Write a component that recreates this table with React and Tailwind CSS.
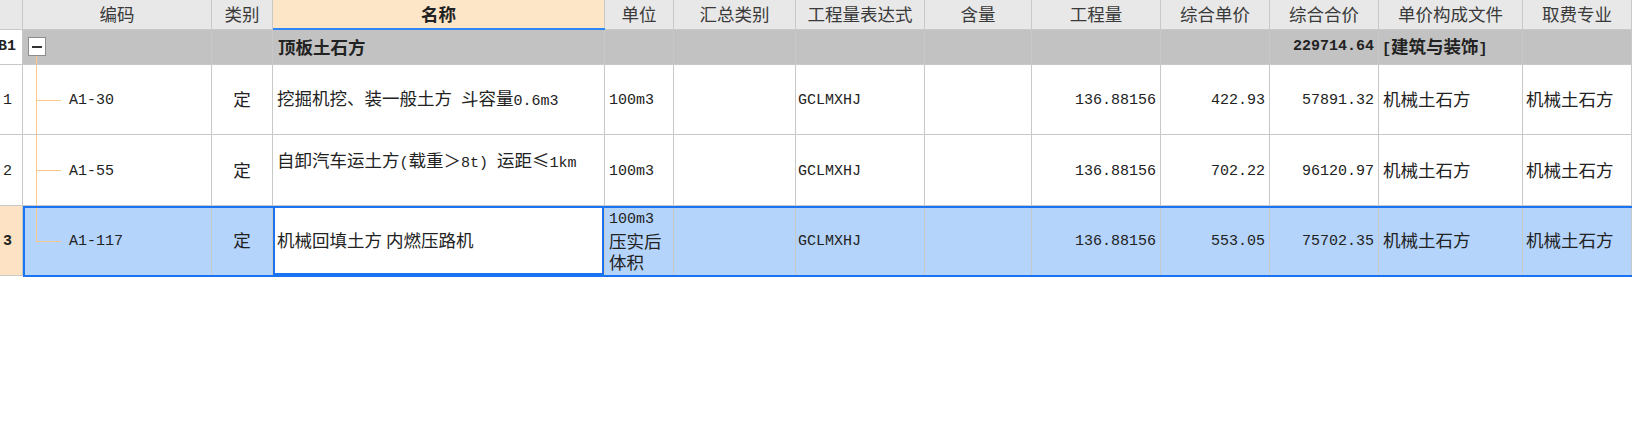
import React from "react";

const GRID =
  "grid grid-cols-[23px_189px_61px_332px_69px_122px_129px_107px_129px_109px_109px_144px_109px]";
const MONO = "font-['Liberation_Mono',monospace] text-[15px]";
const MONOB = "font-['Liberation_Mono',monospace] text-[15px] font-bold";

function Mixed({ text }) {
  const parts = text.match(/[\x20-\x7e]+|[^\x20-\x7e]+/g) || [];
  return (
    <span className="leading-[21px]">
      {parts.map((p, i) =>
        /^[\x20-\x7e]+$/.test(p) ? (
          <span key={i} className={MONO + " whitespace-pre"}>
            {p}
          </span>
        ) : (
          <span key={i}>{p}</span>
        )
      )}
    </span>
  );
}

const cell = "flex items-center border-r border-b border-[#c8c8c8] overflow-hidden whitespace-nowrap";
const mcell = "flex items-center pt-[4px] border-r border-b border-[#c8c8c8] overflow-hidden whitespace-nowrap font-['Liberation_Mono',monospace] text-[15px]";

const headers = [
  "",
  "编码",
  "类别",
  "名称",
  "单位",
  "汇总类别",
  "工程量表达式",
  "含量",
  "工程量",
  "综合单价",
  "综合合价",
  "单价构成文件",
  "取费专业",
];

const rows = [
  {
    n: "1",
    code: "A1-30",
    name: "挖掘机挖、装一般土方 斗容量0.6m3",
    qty: "136.88156",
    price: "422.93",
    total: "57891.32",
    h: "h-[70px]",
  },
  {
    n: "2",
    code: "A1-55",
    name: "自卸汽车运土方(载重＞8t) 运距≤1km",
    qty: "136.88156",
    price: "702.22",
    total: "96120.97",
    h: "h-[71px]",
    top: true,
  },
];

export default function App() {
  return (
    <div className="w-[1632px] h-[447px] bg-white font-['Noto_Sans_CJK_SC',sans-serif] text-[17.5px] text-[#222] overflow-hidden">
      {/* header */}
      <div className={GRID + " h-[30px]"}>
        {headers.map((h, i) => (
          <div
            key={i}
            className={
              i === 3
                ? "flex items-center justify-center border-r border-b border-[#c8c8c8] bg-[#fde5c7] font-bold text-[#222] relative"
                : cell + " justify-center bg-[#e8e8e8] text-[#3a3a3a]"
            }
          >
            {h}
            {i === 3 && (
              <div className="absolute left-0 right-[-1px] bottom-[-1px] h-[2px] bg-[#2f86f6]" />
            )}
          </div>
        ))}
      </div>

      {/* group row */}
      <div className={GRID + " h-[35px] bg-[#c2c2c2]"}>
        <div className={cell + " justify-end pr-[6px] bg-white " + MONOB}>B1</div>
        <div className={cell + " relative"}>
          <div className="absolute left-[5px] top-[7px] w-[18px] h-[19px] border border-[#8c8c8c] bg-white flex items-center justify-center">
            <div className="w-[10px] h-[2px] bg-[#333]" />
          </div>
          <div className="absolute left-[13px] top-[26px] bottom-[-1px] w-px bg-[#fbc98b]" />
        </div>
        <div className={cell} />
        <div className={cell + " pl-[5px] font-bold"}>顶板土石方</div>
        <div className={cell} />
        <div className={cell} />
        <div className={cell} />
        <div className={cell} />
        <div className={cell} />
        <div className={cell} />
        <div className={cell + " justify-end pr-[4px] " + MONOB}>229714.64</div>
        <div className={cell + " pl-[3px] font-bold"}>
          <span>
            <span className={MONOB}>[</span>建筑与装饰<span className={MONOB}>]</span>
          </span>
        </div>
        <div className={cell} />
      </div>

      {/* data rows */}
      {rows.map((r) => (
        <div key={r.n} className={GRID + " " + r.h + " bg-white"}>
          <div className={mcell + " pl-[3px]"}>{r.n}</div>
          <div className={mcell + " relative pl-[46px]"}>
            <div className="absolute left-[13px] top-0 bottom-[-1px] w-px bg-[#fbc98b]" />
            <div className="absolute left-[13px] top-1/2 w-[25px] h-px bg-[#fbc98b]" />
            {r.code}
          </div>
          <div className={cell + " justify-center"}>定</div>
          <div className={cell + " pl-[4px] " + (r.top ? "items-start pt-[14px]" : "")}>
            <Mixed text={r.name} />
          </div>
          <div className={mcell + " pl-[4px]"}>100m3</div>
          <div className={cell} />
          <div className={mcell + " pl-[2px]"}>GCLMXHJ</div>
          <div className={cell} />
          <div className={mcell + " justify-end pr-[4px]"}>{r.qty}</div>
          <div className={mcell + " justify-end pr-[4px]"}>{r.price}</div>
          <div className={mcell + " justify-end pr-[4px]"}>{r.total}</div>
          <div className={cell + " pl-[4px]"}>机械土石方</div>
          <div className={cell + " pl-[3px]"}>机械土石方</div>
        </div>
      ))}

      {/* selected row */}
      <div className={GRID + " h-[70px] bg-[#b4d4fc] relative"}>
        <div className={mcell + " pl-[3px] bg-[#fde3c3] font-bold"}>3</div>
        <div className={mcell + " relative pl-[46px]"}>
          <div className="absolute left-[13px] top-0 h-1/2 w-px bg-[#fbc98b]" />
          <div className="absolute left-[13px] top-1/2 w-[25px] h-px bg-[#fbc98b]" />
          A1-117
        </div>
        <div className={cell + " justify-center"}>定</div>
        <div className={cell + " pl-[4px] bg-white shadow-[inset_0_0_0_2px_#1a73f0]"}>机械回填土方 内燃压路机</div>
        <div className="flex flex-col justify-center pl-[4px] border-r border-b border-[#c8c8c8] leading-[20px] overflow-hidden">
          <span className={MONO + " leading-[20px]"}>100m3</span>
          <span className="leading-[21px]">压实后</span>
          <span className="leading-[21px]">体积</span>
        </div>
        <div className={cell} />
        <div className={mcell + " pl-[2px]"}>GCLMXHJ</div>
        <div className={cell} />
        <div className={mcell + " justify-end pr-[4px]"}>136.88156</div>
        <div className={mcell + " justify-end pr-[4px]"}>553.05</div>
        <div className={mcell + " justify-end pr-[4px]"}>75702.35</div>
        <div className={cell + " pl-[4px]"}>机械土石方</div>
        <div className={cell + " pl-[3px]"}>机械土石方</div>
        <div className="absolute left-[23px] right-[-2px] top-0 bottom-[-1px] border-2 border-[#1a73f0] pointer-events-none" />
      </div>
    </div>
  );
}
